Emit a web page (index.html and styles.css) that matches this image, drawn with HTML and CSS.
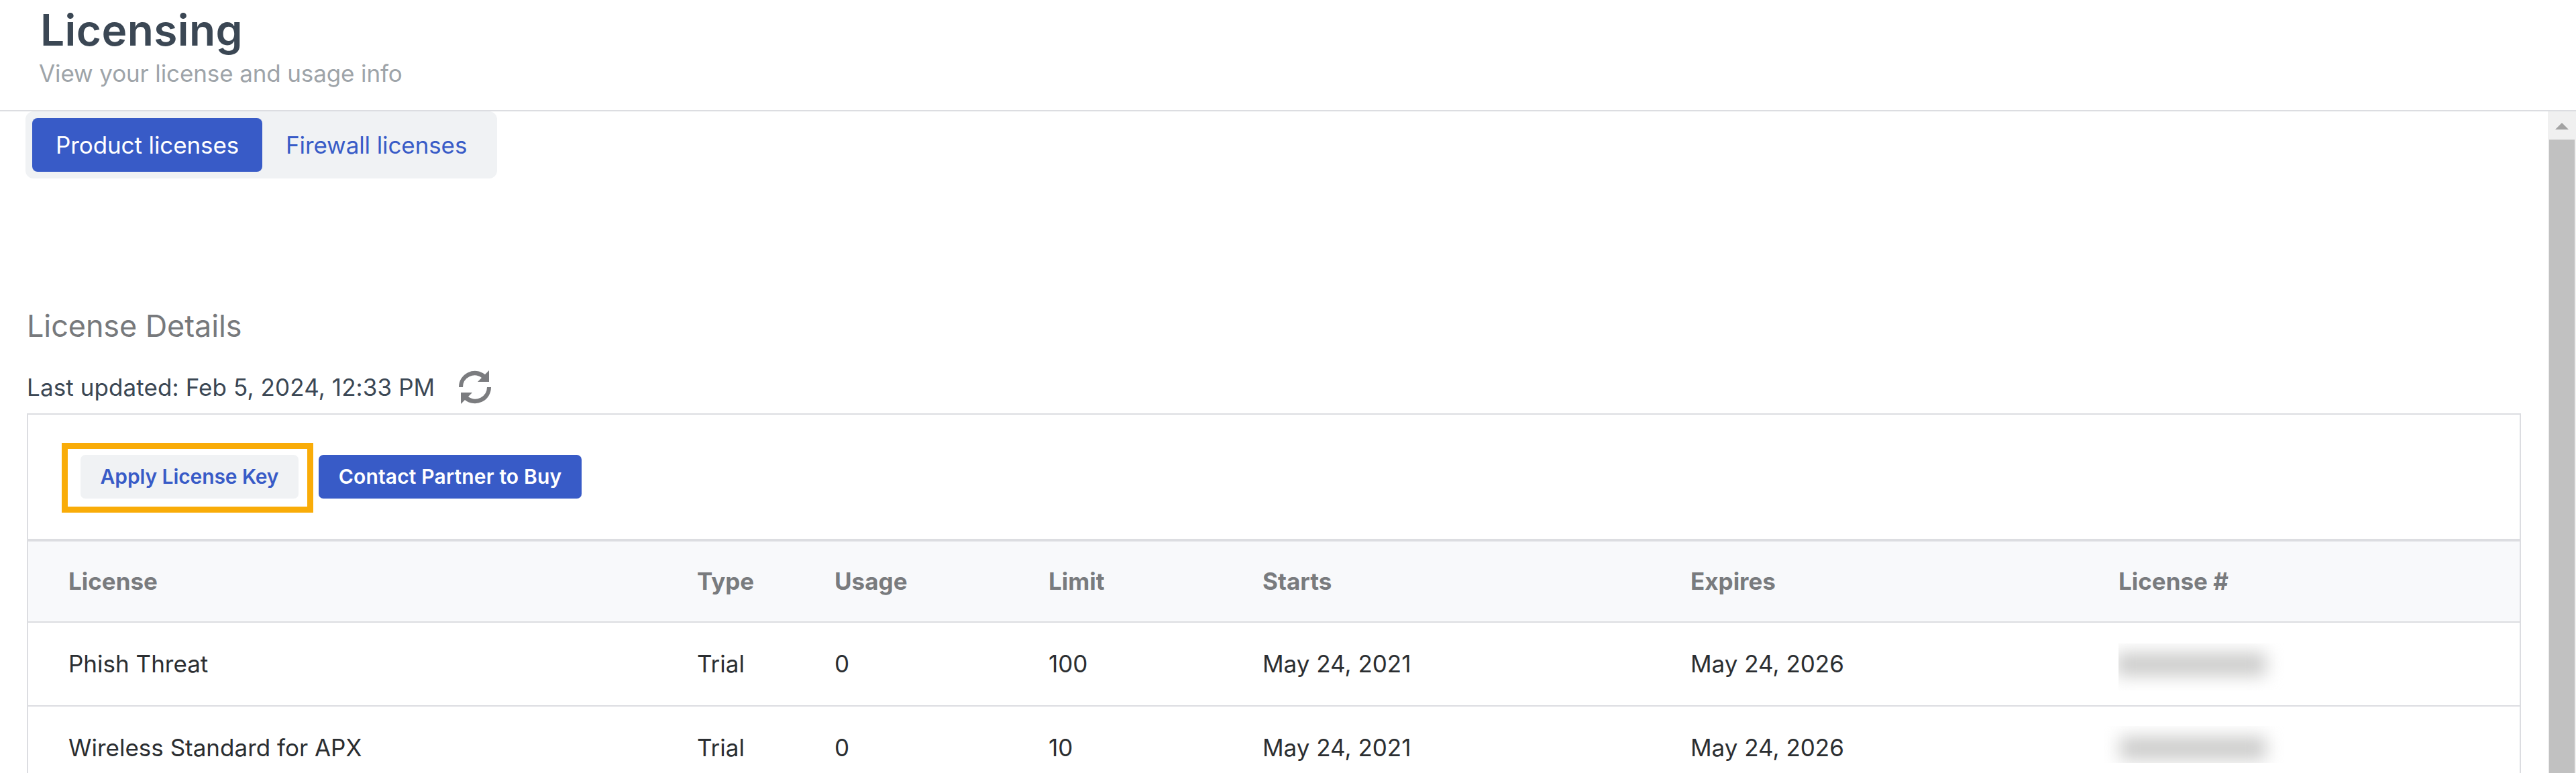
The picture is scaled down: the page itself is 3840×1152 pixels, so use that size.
FILE: index.html
```html
<!DOCTYPE html>
<html lang="en">
<head>
    <meta charset="UTF-8">
    <meta name="viewport" content="width=device-width, initial-scale=1.0">
    <title>Licensing</title>
    <link rel="stylesheet" href="styles.css">
</head>
<body>
    <header class="page-header">
        <h1>Licensing</h1>
        <p>View your license and usage info</p>
    </header>

    <div class="page-body">
        <main class="content">
            <nav class="tabs">
                <a class="tab active">Product licenses</a>
                <a class="tab">Firewall licenses</a>
            </nav>

            <h2>License Details</h2>
            <div class="updated">
                <span>Last updated: Feb 5, 2024, 12:33 PM</span>
                <svg class="refresh" viewBox="0 0 48 50">
                    <path d="M0 25A24 24 0 0 1 39 6L45 0V17H28L34 11A17.500 17.500 0 0 0 6 25Z"/>
                    <path d="M48 25A24 24 0 0 1 9 44L3 50V33H20L14 39A17.500 17.500 0 0 0 42 25Z"/>
                </svg>
            </div>

            <section class="card">
                <div class="toolbar">
                    <div class="highlight">
                        <button class="btn">Apply License Key</button>
                    </div>
                    <button class="btn primary">Contact Partner to Buy</button>
                </div>

                <!-- License table -->
                <div class="row head">
                    <span>License</span>
                    <span>Type</span>
                    <span>Usage</span>
                    <span>Limit</span>
                    <span>Starts</span>
                    <span>Expires</span>
                    <span>License #</span>
                </div>
                <div class="row">
                    <span>Phish Threat</span>
                    <span>Trial</span>
                    <span>0</span>
                    <span>100</span>
                    <span>May 24, 2021</span>
                    <span>May 24, 2026</span>
                    <span class="masked"><i></i></span>
                </div>
                <div class="row">
                    <span>Wireless Standard for APX</span>
                    <span>Trial</span>
                    <span>0</span>
                    <span>10</span>
                    <span>May 24, 2021</span>
                    <span>May 24, 2026</span>
                    <span class="masked second"><i></i></span>
                </div>
            </section>
        </main>

        <div class="scrollbar">
            <svg class="arrow" viewBox="0 0 20 10"><path d="M10 0L20 10H0Z"/></svg>
            <div class="thumb"></div>
        </div>
    </div>
</body>
</html>
```

FILE: styles.css
```css
* {
    margin: 0;
    padding: 0;
    box-sizing: border-box;
}

body {
    font-family: Inter, "Liberation Sans", sans-serif;
    font-size: 35px;
    background: #fff;
    color: #2b2e31;
    height: 1152px;
    overflow: hidden;
    white-space: nowrap;
}

.page-header {
    height: 166px;
    padding: 4px 0 0 58px;
    border-bottom: 2px solid #dcdde1;
}

.page-header h1 {
    padding-left: 2px;
    font-size: 64px;
    font-weight: 600;
    line-height: 82px;
    letter-spacing: 0.4px;
    color: #3b4754;
}

.page-header p {
    line-height: 46px;
    letter-spacing: -0.12px;
    color: #9ea4a9;
}

.page-body {
    display: flex;
    height: 986px;
    overflow: hidden;
}

.content {
    flex: 1;
    padding: 0 40px;
}

.tabs {
    display: flex;
    width: 703px;
    margin-left: -2px;
    padding: 10px;
    background: #f0f2f4;
    border-radius: 12px;
}

.tab {
    padding: 0 34px 0 35px;
    line-height: 80px;
    letter-spacing: -0.1px;
    color: #385bc7;
    border-radius: 8px;
}

.tab.active {
    width: 343px;
    background: #385bc7;
    color: #fff;
}

h2 {
    margin-top: 190px;
    font-size: 45px;
    font-weight: 400;
    line-height: 60px;
    letter-spacing: -0.1px;
    color: #77797c;
}

.updated {
    display: flex;
    align-items: center;
    height: 82px;
    margin-top: 20px;
    margin-bottom: -2px;
    gap: 36px;
    letter-spacing: 0.1px;
    color: #3b4754;
}

.refresh {
    width: 48px;
    height: 50px;
    fill: #7b7c7f;
}

.card {
    width: 3718px;
    border: 2px solid #dcdde1;
    border-bottom: 0;
}

.toolbar {
    display: flex;
    align-items: center;
    gap: 8px;
    height: 185px;
    padding: 2px 0 0 50px;
}

.highlight {
    padding: 9px 13px 12px 19px;
    border: 9px solid #f9ac08;
}

.btn {
    display: block;
    width: 325px;
    height: 65px;
    border: 0;
    border-radius: 7px;
    font: 600 30px Inter, "Liberation Sans", sans-serif;
    letter-spacing: -0.1px;
    background: #f0f2f4;
    color: #385bc7;
}

.btn.primary {
    width: 392px;
    margin-bottom: 3px;
    letter-spacing: 0.15px;
    background: #385bc7;
    color: #fff;
}

.row {
    display: grid;
    grid-template-columns: 937px 205px 319px 319px 638px 638px 1fr;
    align-items: center;
    height: 125px;
    padding: 0 0 2px 60px;
    border-bottom: 2px solid #dcdde1;
}

.row.head {
    border-top: 4px solid #dcdde1;
    background: #f8f9fb;
    font-weight: 700;
    color: #797b7e;
}

/* Hidden license numbers */
.masked {
    width: 250px;
    height: 70px;
    margin-top: 10px;
    overflow: hidden;
}

.masked i {
    display: block;
    width: 224px;
    height: 34px;
    margin: 14px 0 0 -4px;
    background: #cbcbca;
    filter: blur(13px);
}

.masked.second {
    width: 268px;
    height: 55px;
    margin: -8px 0 0 -22px;
}

.masked.second i {
    width: 218px;
    margin: 16px 0 0 24px;
}

.scrollbar {
    width: 42px;
    padding: 17px 2px 0;
    background: #f0f0f0;
}

.arrow {
    display: block;
    width: 20px;
    height: 10px;
    margin: 0 0 15px 9px;
    fill: #a3a3a3;
}

.thumb {
    height: 960px;
    background: #c1c1c1;
}
```
